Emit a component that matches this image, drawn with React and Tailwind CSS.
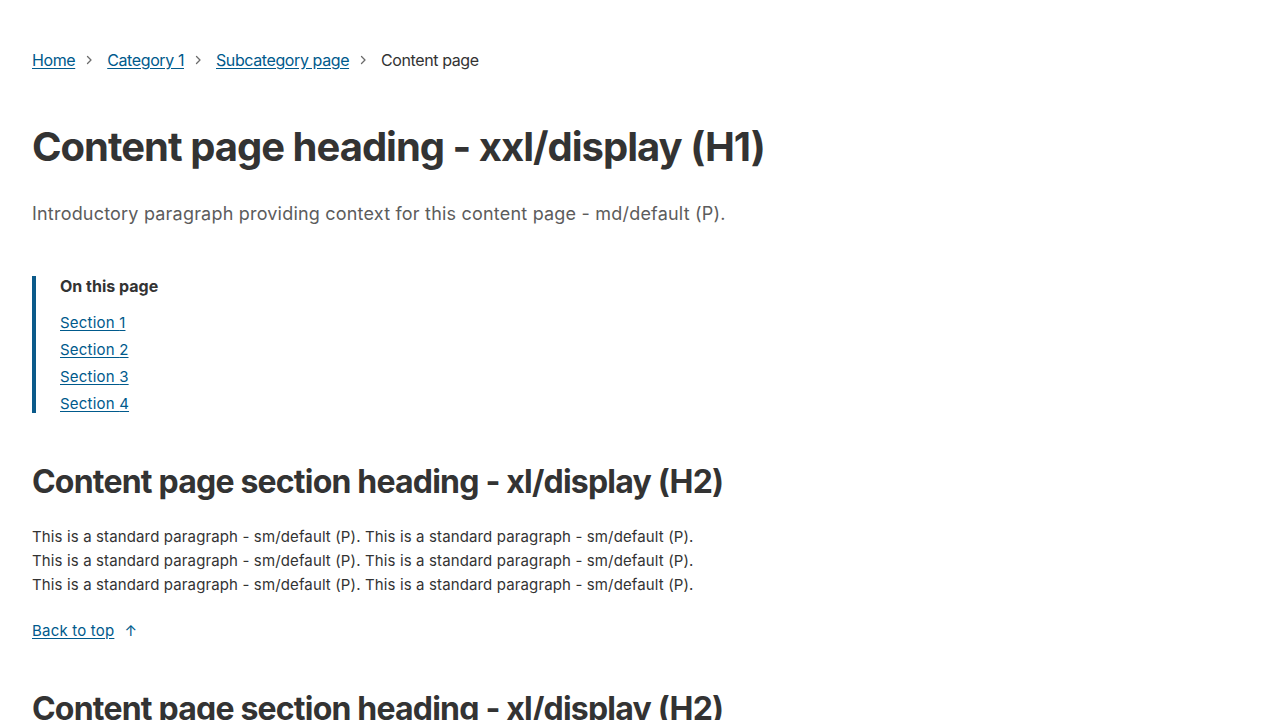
import React from "react";

const ff = { fontFamily: "Inter, 'Noto Sans', sans-serif" };

function Chevron() {
  return (
    <svg width="16" height="16" viewBox="0 0 16 16" className="ml-[6px] mr-[10px] shrink-0" fill="none">
      <path d="M6.5 4.5 L10 8 L6.5 11.5" stroke="#6b6b6b" strokeWidth="1.3" strokeLinecap="round" strokeLinejoin="round" />
    </svg>
  );
}

function Section({ top }) {
  return (
    <section className={top}>
      <h2 className="text-[32px] leading-[40px] font-bold text-[#333333] tracking-[-0.8px]">
        Content page section heading - xl/display (H2)
      </h2>
      <p className="mt-[23px] text-[15px] leading-[24px] text-[#333333] tracking-[0.13px]">
        This is a standard paragraph - sm/default (P). This is a standard paragraph - sm/default (P).
        <br />
        This is a standard paragraph - sm/default (P). This is a standard paragraph - sm/default (P).
        <br />
        This is a standard paragraph - sm/default (P). This is a standard paragraph - sm/default (P).
      </p>
      <a href="#" className="mt-[22px] inline-flex items-center text-[15px] leading-[24px] text-[#005a8c] tracking-[0.2px]">
        <span className="underline underline-offset-2">Back to top</span>
        <span className="ml-[10px]">↑</span>
      </a>
    </section>
  );
}

export default function App() {
  return (
    <div className="bg-white min-h-screen px-[32px] pt-[48px]" style={ff}>
      <nav className="flex items-center text-[16px] leading-[24px] tracking-[-0.4px]">
        <a href="#" className="text-[#005a8c] underline underline-offset-2">Home</a>
        <Chevron />
        <a href="#" className="text-[#005a8c] underline underline-offset-2">Category 1</a>
        <Chevron />
        <a href="#" className="text-[#005a8c] underline underline-offset-2">Subcategory page</a>
        <Chevron />
        <span className="text-[#333333]">Content page</span>
      </nav>

      <h1 className="mt-[50px] text-[40px] leading-[50px] font-bold text-[#333333] tracking-[-1px]">
        Content page heading - xxl/display (H1)
      </h1>
      <p className="mt-[28px] text-[18px] leading-[28px] text-[#5c5c5c] tracking-[0.2px]">
        Introductory paragraph providing context for this content page - md/default (P).
      </p>

      <div className="mt-[48px] border-l-4 border-[#0b5a8a] pl-[24px]">
        <div className="text-[16px] leading-[20px] font-bold text-[#333333]">On this page</div>
        <ul className="mt-[18px] flex flex-col gap-[9px]">
          {[1, 2, 3, 4].map((n) => (
            <li key={n} className="text-[15px] leading-[18px] tracking-[0.2px]">
              <a href="#" className="text-[#005a8c] underline underline-offset-2">Section {n}</a>
            </li>
          ))}
        </ul>
      </div>

      <Section top="mt-[49px]" />
      <Section top="mt-[46px]" />
    </div>
  );
}
